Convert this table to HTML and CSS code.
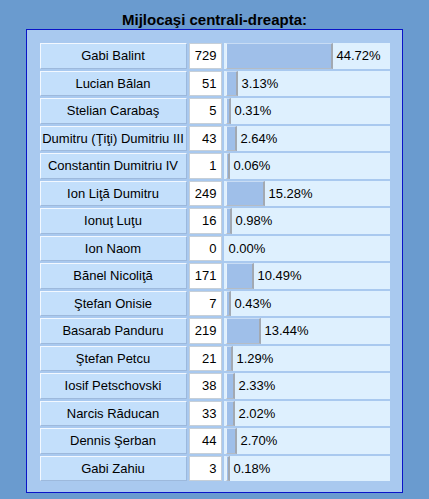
FILE: index.html
```html
<!DOCTYPE html>
<html>
<head>
<meta charset="utf-8">
<link rel="stylesheet" href="styles.css">
</head>
<body>
<h1 class="title">Mijlocaşi centrali-dreapta:</h1>
<div class="box">
<table class="poll">
<tr><td class="name">Gabi Balint</td><td class="num">729</td><td class="res"><div class="rescell"><span class="bar" style="width:104px"></span><span class="pct">44.72%</span></div></td></tr>
<tr><td class="name">Lucian Bălan</td><td class="num">51</td><td class="res"><div class="rescell"><span class="bar" style="width:9px"></span><span class="pct">3.13%</span></div></td></tr>
<tr><td class="name">Stelian Carabaş</td><td class="num">5</td><td class="res"><div class="rescell"><span class="bar" style="width:2px"></span><span class="pct">0.31%</span></div></td></tr>
<tr><td class="name">Dumitru (Ţiţi) Dumitriu III</td><td class="num">43</td><td class="res"><div class="rescell"><span class="bar" style="width:8px"></span><span class="pct">2.64%</span></div></td></tr>
<tr><td class="name">Constantin Dumitriu IV</td><td class="num">1</td><td class="res"><div class="rescell"><span class="bar" style="width:1px"></span><span class="pct">0.06%</span></div></td></tr>
<tr><td class="name">Ion Liţă Dumitru</td><td class="num">249</td><td class="res"><div class="rescell"><span class="bar" style="width:36px"></span><span class="pct">15.28%</span></div></td></tr>
<tr><td class="name">Ionuţ Luţu</td><td class="num">16</td><td class="res"><div class="rescell"><span class="bar" style="width:3px"></span><span class="pct">0.98%</span></div></td></tr>
<tr><td class="name">Ion Naom</td><td class="num">0</td><td class="res"><div class="rescell zero"><span class="pct">0.00%</span></div></td></tr>
<tr><td class="name">Bănel Nicoliţă</td><td class="num">171</td><td class="res"><div class="rescell"><span class="bar" style="width:25px"></span><span class="pct">10.49%</span></div></td></tr>
<tr><td class="name">Ştefan Onisie</td><td class="num">7</td><td class="res"><div class="rescell"><span class="bar" style="width:2px"></span><span class="pct">0.43%</span></div></td></tr>
<tr><td class="name">Basarab Panduru</td><td class="num">219</td><td class="res"><div class="rescell"><span class="bar" style="width:32px"></span><span class="pct">13.44%</span></div></td></tr>
<tr><td class="name">Ştefan Petcu</td><td class="num">21</td><td class="res"><div class="rescell"><span class="bar" style="width:4px"></span><span class="pct">1.29%</span></div></td></tr>
<tr><td class="name">Iosif Petschovski</td><td class="num">38</td><td class="res"><div class="rescell"><span class="bar" style="width:6px"></span><span class="pct">2.33%</span></div></td></tr>
<tr><td class="name">Narcis Răducan</td><td class="num">33</td><td class="res"><div class="rescell"><span class="bar" style="width:6px"></span><span class="pct">2.02%</span></div></td></tr>
<tr><td class="name">Dennis Şerban</td><td class="num">44</td><td class="res"><div class="rescell"><span class="bar" style="width:8px"></span><span class="pct">2.70%</span></div></td></tr>
<tr><td class="name">Gabi Zahiu</td><td class="num">3</td><td class="res"><div class="rescell"><span class="bar" style="width:1px"></span><span class="pct">0.18%</span></div></td></tr>
</table>
</div>
</body>
</html>
```

FILE: styles.css
```css
html, body {
  margin: 0;
  padding: 0;
}
body {
  background: #6a9bcf;
  font-family: "Liberation Sans", Arial, sans-serif;
  color: #000;
  height: 499px;
  overflow: hidden;
}
.title {
  margin: 0;
  height: 29px;
  box-sizing: border-box;
  padding-top: 11px;
  font-size: 15px;
  line-height: 17px;
  font-weight: bold;
  text-align: center;
  color: #000;
}
.box {
  margin-left: 26px;
  width: 377px;
  height: 464px;
  box-sizing: border-box;
  border: 1px solid #0a14c8;
  background: #a9c9ef;
  padding-top: 11px;
}
.poll {
  border-collapse: separate;
  border-spacing: 2px;
  margin: 0 auto;
  width: 354px;
  font-size: 13px;
  table-layout: fixed;
}
.poll td {
  height: 25.5px;
  padding: 0;
  box-sizing: border-box;
}
.name {
  width: 147px;
  background: #c3dffb;
  border-top: 1px solid #f2f8ff;
  border-left: 1px solid #f2f8ff;
  border-bottom: 1px solid #9db9dc;
  border-right: 1px solid #9db9dc;
  text-align: center;
  white-space: nowrap;
}
.num {
  width: 33px;
  background: #fff;
  border: 1px solid #c6cfd8;
  text-align: right;
  padding-right: 4px !important;
}
.res {
  background: #def0fe;
}
.rescell {
  display: flex;
  align-items: stretch;
  height: 25.5px;
  padding-left: 2px;
}
.rescell.zero {
  padding-left: 4px;
}
.bar {
  display: block;
  background: #9fbfe9;
  border-top: 1px solid #c8dcf4;
  border-left: 1px solid #e8f2fc;
  border-right: 2px solid #a2a9b2;
  border-bottom: 1px solid #b4bcc6;
  margin-right: 3px;
}
.pct {
  align-self: center;
  padding-left: 1px;
}
```
